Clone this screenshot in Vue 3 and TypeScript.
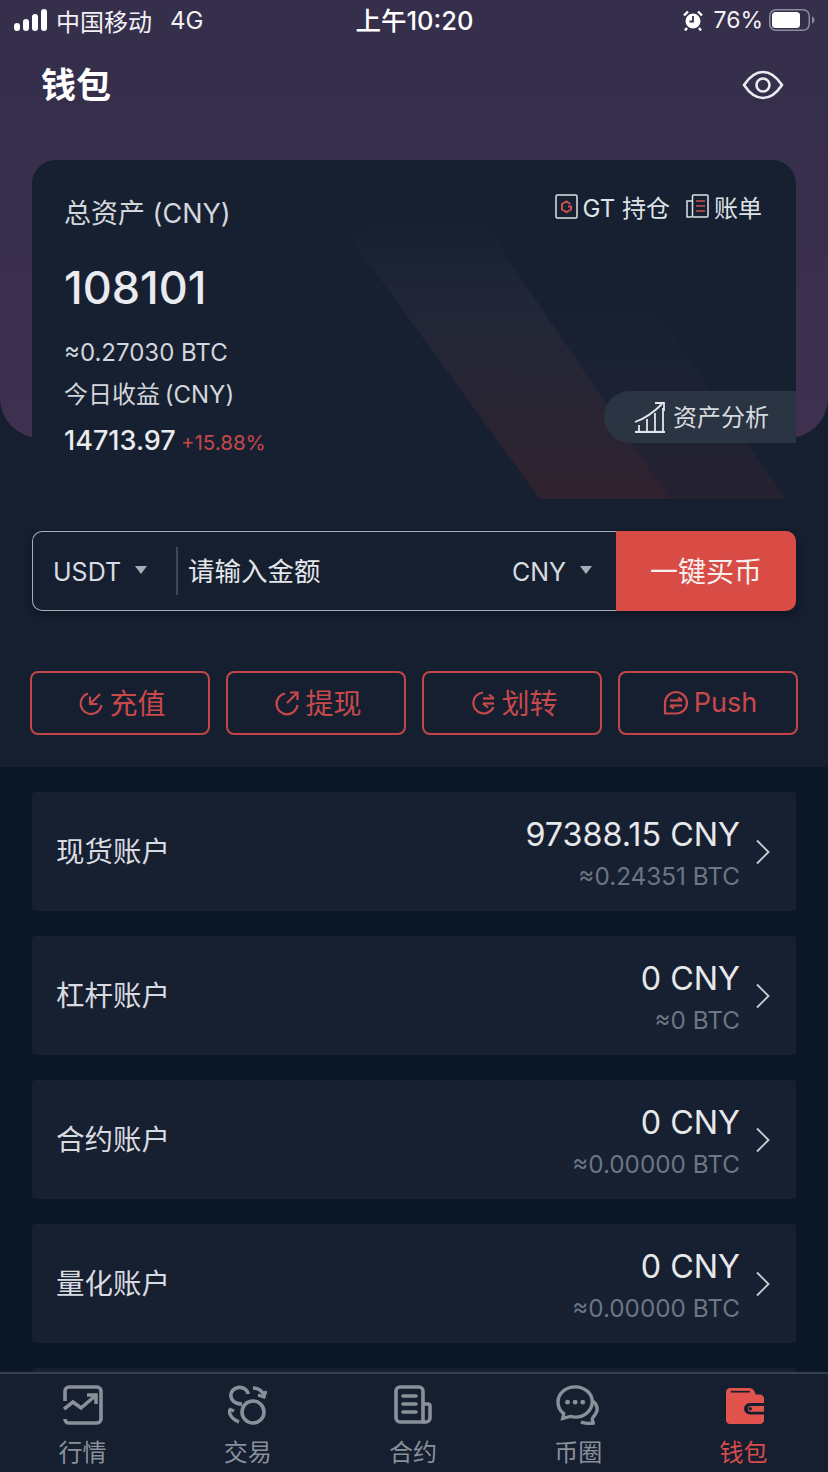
<template>
  <div class="app">
    <div class="scroll">
      <section class="hero">
        <div class="status">
          <div class="status-left">
            <svg class="signal" width="34" height="22" viewBox="0 0 34 22">
              <rect x="0" y="14" width="6" height="8" rx="3" fill="#fff" />
              <rect x="9" y="10" width="6" height="12" rx="3" fill="#fff" />
              <rect x="18" y="5" width="6" height="17" rx="3" fill="#fff" />
              <rect x="27" y="0" width="6" height="22" rx="3" fill="#fff" />
            </svg>
            <span>中国移动</span>
            <span class="net">4G</span>
          </div>
          <div class="status-time">上午10:20</div>
          <div class="status-right">
            <svg width="20" height="22" viewBox="0 0 20 22">
              <circle cx="10" cy="12" r="7.500" fill="#fff" />
              <path d="M10 7v5.500H6.500" fill="none" stroke="#352f4b" stroke-width="1.800" />
              <path d="M1 6.500 5 2.500M19 6.500l-4-4M4 19l-2 2.500M16 19l2 2.500" stroke="#fff" stroke-width="2.400" fill="none" />
            </svg>
            <span class="pct">76%</span>
            <svg width="46" height="24" viewBox="0 0 46 24">
              <rect x="0.750" y="1.750" width="39.500" height="20.500" rx="6" fill="none" stroke="#8f8b9f" stroke-width="1.500" />
              <rect x="3" y="4" width="28" height="16" rx="3.500" fill="#fff" />
              <path d="M43 8.500c1.500.5 2.500 2 2.500 3.500s-1 3-2.500 3.500z" fill="#8f8b9f" />
            </svg>
          </div>
        </div>
        <div class="title-row">
          <h1>钱包</h1>
          <svg width="42" height="30" viewBox="0 0 42 30" fill="none" stroke="#ecebf1" stroke-width="2.600">
            <path d="M2 15C8 6 14 2 21 2s13 4 19 13c-6 9-12 13-19 13S8 24 2 15z" stroke-linejoin="round" />
            <circle cx="21" cy="15" r="6.500" />
          </svg>
        </div>
        <div class="card">
          <svg class="stripes" viewBox="0 0 764 339" preserveAspectRatio="none">
            <defs>
              <linearGradient id="stripeA" gradientUnits="userSpaceOnUse" x1="0" y1="60" x2="0" y2="339">
                <stop offset="0" stop-color="#232838" stop-opacity="0" />
                <stop offset="0.350" stop-color="#222737" />
                <stop offset="1" stop-color="#30222f" />
              </linearGradient>
              <linearGradient id="stripeB" gradientUnits="userSpaceOnUse" x1="0" y1="130" x2="0" y2="339">
                <stop offset="0" stop-color="#1c2234" stop-opacity="0" />
                <stop offset="0.500" stop-color="#1c2234" />
                <stop offset="1" stop-color="#262131" />
              </linearGradient>
            </defs>
            <polygon points="500,134 600,117 754,339 638,339" fill="url(#stripeB)" />
            <polygon points="318,77 425,23 638,339 508,339" fill="url(#stripeA)" />
          </svg>
          <div class="card-top">
            <div class="total-label">总资产 (CNY)</div>
            <div class="card-links">
              <span class="card-link">
                <svg width="23" height="25" viewBox="0 0 23 25" fill="none">
                  <rect x="1" y="1" width="21" height="23" rx="1.500" stroke="#dfe2e7" stroke-width="1.500" />
                  <path d="M15.500 10 11.500 7.500 7 10v5.500l4.500 2.500 4.500-2.500V12.500h-3" stroke="#c9504f" stroke-width="2" />
                </svg>
                GT 持仓
              </span>
              <span class="card-link">
                <svg width="23" height="24" viewBox="0 0 23 24" fill="none">
                  <path d="M6 7H1v16h5" stroke="#dfe2e7" stroke-width="1.500" />
                  <rect x="6.500" y="1" width="15.500" height="22" rx="1" stroke="#dfe2e7" stroke-width="1.500" />
                  <path d="M10 7h9M10 12h9M10 17h9" stroke="#c9504f" stroke-width="1.600" />
                </svg>
                账单
              </span>
            </div>
          </div>
          <div class="total">108101</div>
          <div class="btc">≈0.27030 BTC</div>
          <div class="today">今日收益 (CNY)</div>
          <div class="profit">14713.97 <small>+15.88%</small></div>
          <div class="analysis">
            <svg width="32" height="32" viewBox="0 0 32 32" fill="none" stroke="#e3e6ea" stroke-width="1.800">
              <path d="M1 21C10 18 19 12 28 3" />
              <path d="M21 2h9v8" />
              <path d="M1 31h30" stroke-width="2.200" />
              <path d="M5 30v-6M13 30V18M21 30V12M29 30V7" />
            </svg>
            <span>资产分析</span>
          </div>
        </div>
      </section>

      <div class="buy">
        <div class="buy-field">
          <span class="sel">USDT</span>
          <i class="caret" />
          <span class="sep" />
          <span class="placeholder">请输入金额</span>
          <span class="sel">CNY</span>
          <i class="caret" />
        </div>
        <div class="buy-btn">一键买币</div>
      </div>

      <div class="actions">
        <div v-for="a in actions" :key="a.label" class="action">
          <svg width="26" height="26" viewBox="0 0 26 26" fill="none" stroke="#c9494b" stroke-width="2.200">
            <path v-for="(d, i) in a.paths" :key="i" :d="d" />
          </svg>
          <span :class="{ latin: a.label === 'Push' }">{{ a.label }}</span>
        </div>
      </div>

      <div class="accounts">
        <div v-for="acc in accounts" :key="acc.name" class="account">
          <div class="acc-name">{{ acc.name }}</div>
          <div class="acc-values">
            <div class="acc-cny">{{ acc.cny }} CNY</div>
            <div class="acc-btc">≈{{ acc.btc }} BTC</div>
          </div>
          <svg class="chev" width="16" height="26" viewBox="0 0 16 26" fill="none" stroke="#c9cdd3" stroke-width="1.900">
            <path d="M2 1.500 13.500 13 2 24.500" />
          </svg>
        </div>
        <div class="account" />
      </div>
    </div>

    <nav class="tabbar">
      <div class="tab">
        <svg width="40" height="40" viewBox="0 0 40 40" fill="none" stroke="#8a909a" stroke-width="3.600">
          <path d="M2 16V6a4 4 0 0 1 4-4h28a4 4 0 0 1 4 4v28a4 4 0 0 1-4 4H6c-2.500 0-4-1.500-4-4" stroke-linejoin="round" />
          <path d="M1 24l9-7 8 6 14-12" />
          <path d="M24 10h9v9" />
        </svg>
        <span>行情</span>
      </div>
      <div class="tab">
        <svg width="40" height="40" viewBox="0 0 40 40" fill="none" stroke="#8a909a" stroke-width="3.600">
          <circle cx="25" cy="27" r="11" />
          <path d="M14 19C6 19 2 14 3 9c1-5 7-8 12-6 3 1 5 4 5 6" />
          <path d="M25 3c5 0 9 3 11 7" />
          <path d="M30 10l6 2 2-6" stroke-width="3" />
          <path d="M1 24c0 6 4 11 10 13" />
          <path d="M1 24l5 2" stroke-width="3" />
        </svg>
        <span>交易</span>
      </div>
      <div class="tab">
        <svg width="40" height="40" viewBox="0 0 40 40" fill="none" stroke="#8a909a" stroke-width="3.600">
          <path d="M30 37H7a4 4 0 0 1-4-4V6a4 4 0 0 1 4-4h19a4 4 0 0 1 4 4z" />
          <path d="M30 19h5a2 2 0 0 1 2 2v12a4 4 0 0 1-4 4h-3" />
          <path d="M10 11h13M10 19h13M10 27h13" stroke-linecap="round" />
        </svg>
        <span>合约</span>
      </div>
      <div class="tab">
        <svg width="46" height="42" viewBox="0 0 46 42" fill="none" stroke="#8a909a" stroke-width="3.600">
          <path d="M20 2C10 2 2 9 2 18c0 5 2 9 6 12l-1 5 8-2c2 .5 3 .7 5 .7 10 0 18-7 18-16S30 2 20 2z" />
          <circle cx="12" cy="18" r="2.500" fill="#8a909a" stroke="none" />
          <circle cx="20" cy="18" r="2.500" fill="#8a909a" stroke="none" />
          <circle cx="28" cy="18" r="2.500" fill="#8a909a" stroke="none" />
          <path d="M38 16c5 4 7 10 3 15-1 2-3 3-3 5 0 1 1 3 1 4-4 1-9 0-13-1" />
        </svg>
        <span>币圈</span>
      </div>
      <div class="tab tab-active">
        <svg class="wallet-icon" width="38" height="40" viewBox="0 0 40 40">
          <path d="M4 2h20c4 0 7 3 7 7h5c2 0 4 2 4 4v5H25a6 6 0 0 0 0 12h15v6c0 2-2 4-4 4H4c-2 0-4-2-4-4V6c0-2 2-4 4-4z" fill="#e2534d" />
          <path d="M5 6h20" stroke="#151f30" stroke-width="1.800" />
          <path d="M40 21H26a3 3 0 0 0 0 6h14z" fill="#e2534d" />
          <circle cx="25.500" cy="24" r="1.800" fill="#151f30" />
        </svg>
        <span>钱包</span>
      </div>
    </nav>
  </div>
</template>

<script setup lang="ts">
interface Action {
  label: string
  paths: string[]
}

interface Account {
  name: string
  cny: string
  btc: string
}

const actions: Action[] = [
  {
    label: '充值',
    paths: [
      'M10 3.500A10.500 10.500 0 1 0 23.500 15',
      'M22 4 12.500 13.500',
      'M12 6.500v7.500h7.500'
    ]
  },
  {
    label: '提现',
    paths: [
      'M11 3.500A10.500 10.500 0 1 0 23.500 15',
      'M13 13 23 3',
      'M16 2.500h7.500V10'
    ]
  },
  {
    label: '划转',
    paths: [
      'M13 2.500A10.500 10.500 0 1 0 23.500 17',
      'M13 8.500h11',
      'M19 4.500 24 8.500',
      'M24 13.500H13',
      'M18 17.500 13 13.500'
    ]
  },
  {
    label: 'Push',
    paths: [
      'M13 2C7 2 2 7 2 13v10.500h11c6 0 11-4.500 11-10.500S19 2 13 2z',
      'M7 10.500h12',
      'M15 7.500l4 3',
      'M19 15.500H7',
      'M11 18.500l-4-3'
    ]
  }
]

const accounts: Account[] = [
  { name: '现货账户', cny: '97388.15', btc: '0.24351' },
  { name: '杠杆账户', cny: '0', btc: '0' },
  { name: '合约账户', cny: '0', btc: '0.00000' },
  { name: '量化账户', cny: '0', btc: '0.00000' }
]
</script>

<style scoped>
.app {
  width: 828px;
  height: 1472px;
  display: flex;
  flex-direction: column;
  overflow: hidden;
  background: #151f30;
  color: #e4e6ea;
  font-family: Inter, "Noto Sans CJK SC", sans-serif;
}

.scroll {
  flex: 1;
  min-height: 0;
  overflow: hidden;
}

.hero {
  height: 438px;
  box-sizing: border-box;
  background: linear-gradient(180deg, #352f4b 0%, #372f4c 40%, #3f3050 100%);
  border-radius: 0 0 40px 40px;
}

.status {
  height: 40px;
  padding: 0 13px 0 14px;
  display: grid;
  grid-template-columns: 1fr auto 1fr;
  align-items: center;
  font-size: 24px;
  color: #f2f1f5;
}

.status-left {
  display: flex;
  align-items: center;
}

.signal {
  margin-right: 8px;
}

.net {
  margin-left: 18px;
}

.status-time {
  padding-bottom: 3px;
  font-size: 25.500px;
  font-weight: 500;
  color: #fff;
}

.status-right {
  display: flex;
  align-items: center;
  justify-content: flex-end;
  gap: 8px;
}

.pct {
  margin-left: 2px;
  margin-right: -2px;
  font-size: 23px;
}

.title-row {
  display: flex;
  justify-content: space-between;
  align-items: center;
  height: 90px;
  padding: 0 44px 0 41px;
}

h1 {
  margin: 0;
  font-size: 35px;
  line-height: 1;
  font-weight: 700;
  color: #fff;
}

.card {
  position: relative;
  height: 339px;
  margin: 30px 32px 0;
  padding: 0 32px;
  box-sizing: border-box;
  background: #162031;
  border-radius: 24px 24px 0 0;
  overflow: hidden;
}

.stripes {
  position: absolute;
  left: 0;
  top: 0;
  width: 100%;
  height: 100%;
}

.card-top,
.total,
.btc,
.today,
.profit {
  position: relative;
}

.card-top {
  display: flex;
  justify-content: space-between;
  padding-top: 35px;
}

.total-label {
  padding-top: 1px;
  font-size: 27px;
  line-height: 36px;
  color: #d3d6db;
}

.card-links {
  display: flex;
  gap: 16px;
  margin-top: -7px;
  margin-right: 2px;
  height: 36px;
}

.card-link {
  display: flex;
  align-items: center;
  gap: 5px;
  font-size: 24px;
  color: #dfe2e7;
}

.total {
  margin-top: 28px;
  font-size: 45px;
  line-height: 56px;
  font-weight: 500;
  color: #e9ebee;
}

.btc {
  margin-top: 21px;
  font-size: 24px;
  line-height: 32px;
  color: #d3d6db;
}

.today {
  margin-top: 10px;
  font-size: 24px;
  line-height: 32px;
  word-spacing: -2px;
  color: #d3d6db;
}

.profit {
  margin-top: 10px;
  font-size: 27px;
  line-height: 40px;
  font-weight: 500;
  word-spacing: -2px;
  color: #e9ebee;
}

.profit small {
  font-size: 20.500px;
  font-weight: 400;
  color: #c5474a;
}

.analysis {
  position: absolute;
  right: 0;
  top: 231px;
  width: 192px;
  height: 52px;
  display: flex;
  align-items: center;
  gap: 7px;
  padding-left: 30px;
  box-sizing: border-box;
  background: #2a3443;
  border-radius: 26px 0 0 26px;
  font-size: 24px;
  color: #d7dade;
}

.analysis span {
  padding-bottom: 4px;
}

.buy {
  display: flex;
  height: 80px;
  margin: 93px 32px 0;
  box-sizing: border-box;
  border-radius: 10px;
  box-shadow: 0 4px 10px rgba(5, 10, 20, 0.400);
}

.buy-field {
  flex: 1;
  display: flex;
  align-items: center;
  padding-left: 20px;
  box-sizing: border-box;
  border: 1px solid #a9acb4;
  border-right: none;
  border-radius: 10px 0 0 10px;
  font-size: 25px;
  color: #d9dbe0;
}

.caret {
  width: 0;
  height: 0;
  margin: 0 24px 2px 14px;
  border-left: 6px solid transparent;
  border-right: 6px solid transparent;
  border-top: 8px solid #a9acb4;
}

.sel {
  padding-top: 2px;
  line-height: 1;
}

.sep {
  width: 2px;
  height: 48px;
  margin-left: 5px;
  background: #3f4857;
}

.placeholder {
  flex: 1;
  margin-left: 10px;
  padding-bottom: 4px;
  font-size: 26.500px;
  color: #e4e6ea;
}

.buy-btn {
  width: 180px;
  display: flex;
  align-items: center;
  justify-content: center;
  padding-bottom: 2px;
  box-sizing: border-box;
  background: #d84c45;
  border-radius: 0 10px 10px 0;
  font-size: 28px;
  color: #f7eeee;
}

.actions {
  display: grid;
  grid-template-columns: repeat(4, 180px);
  gap: 16px;
  padding: 60px 30px 32px;
}

.action {
  height: 64px;
  display: flex;
  align-items: center;
  justify-content: center;
  gap: 5px;
  padding-left: 4px;
  box-sizing: border-box;
  border: 2px solid #c24547;
  border-radius: 8px;
  font-size: 28px;
  color: #c9494b;
}

.action span {
  padding-bottom: 2px;
}

.action .latin {
  font-size: 27px;
}

.accounts {
  display: flex;
  flex-direction: column;
  gap: 25px;
  padding: 25px 32px;
  background: #0b1724;
}

.account {
  height: 119px;
  flex: none;
  display: flex;
  align-items: center;
  box-sizing: border-box;
  padding: 0 25px 0 24px;
  background: #162031;
  border-radius: 4px;
}

.acc-name {
  flex: 1;
  padding-bottom: 4px;
  font-size: 28.500px;
  color: #d9dbe0;
}

.acc-values {
  padding-top: 2px;
  text-align: right;
}

.acc-cny {
  font-size: 32.300px;
  line-height: 44px;
  color: #e6e8eb;
}

.acc-btc {
  margin-top: 3px;
  font-size: 24.300px;
  line-height: 32px;
  color: #6c7583;
}

.chev {
  margin: 0 0 0 15px;
}

.tabbar {
  flex: none;
  height: 100px;
  display: grid;
  grid-template-columns: repeat(5, 1fr);
  padding-right: 2px;
  box-sizing: border-box;
  border-top: 2px solid #363f4f;
  background: #151f30;
}

.tab {
  display: flex;
  flex-direction: column;
  align-items: center;
  padding-top: 11px;
  font-size: 24px;
  line-height: 32px;
  color: #8a909a;
}

.tab svg {
  height: 40px;
  margin-bottom: 12px;
}

.tab .wallet-icon {
  margin-left: 3px;
}

.tab-active {
  color: #d84c4a;
}
</style>
